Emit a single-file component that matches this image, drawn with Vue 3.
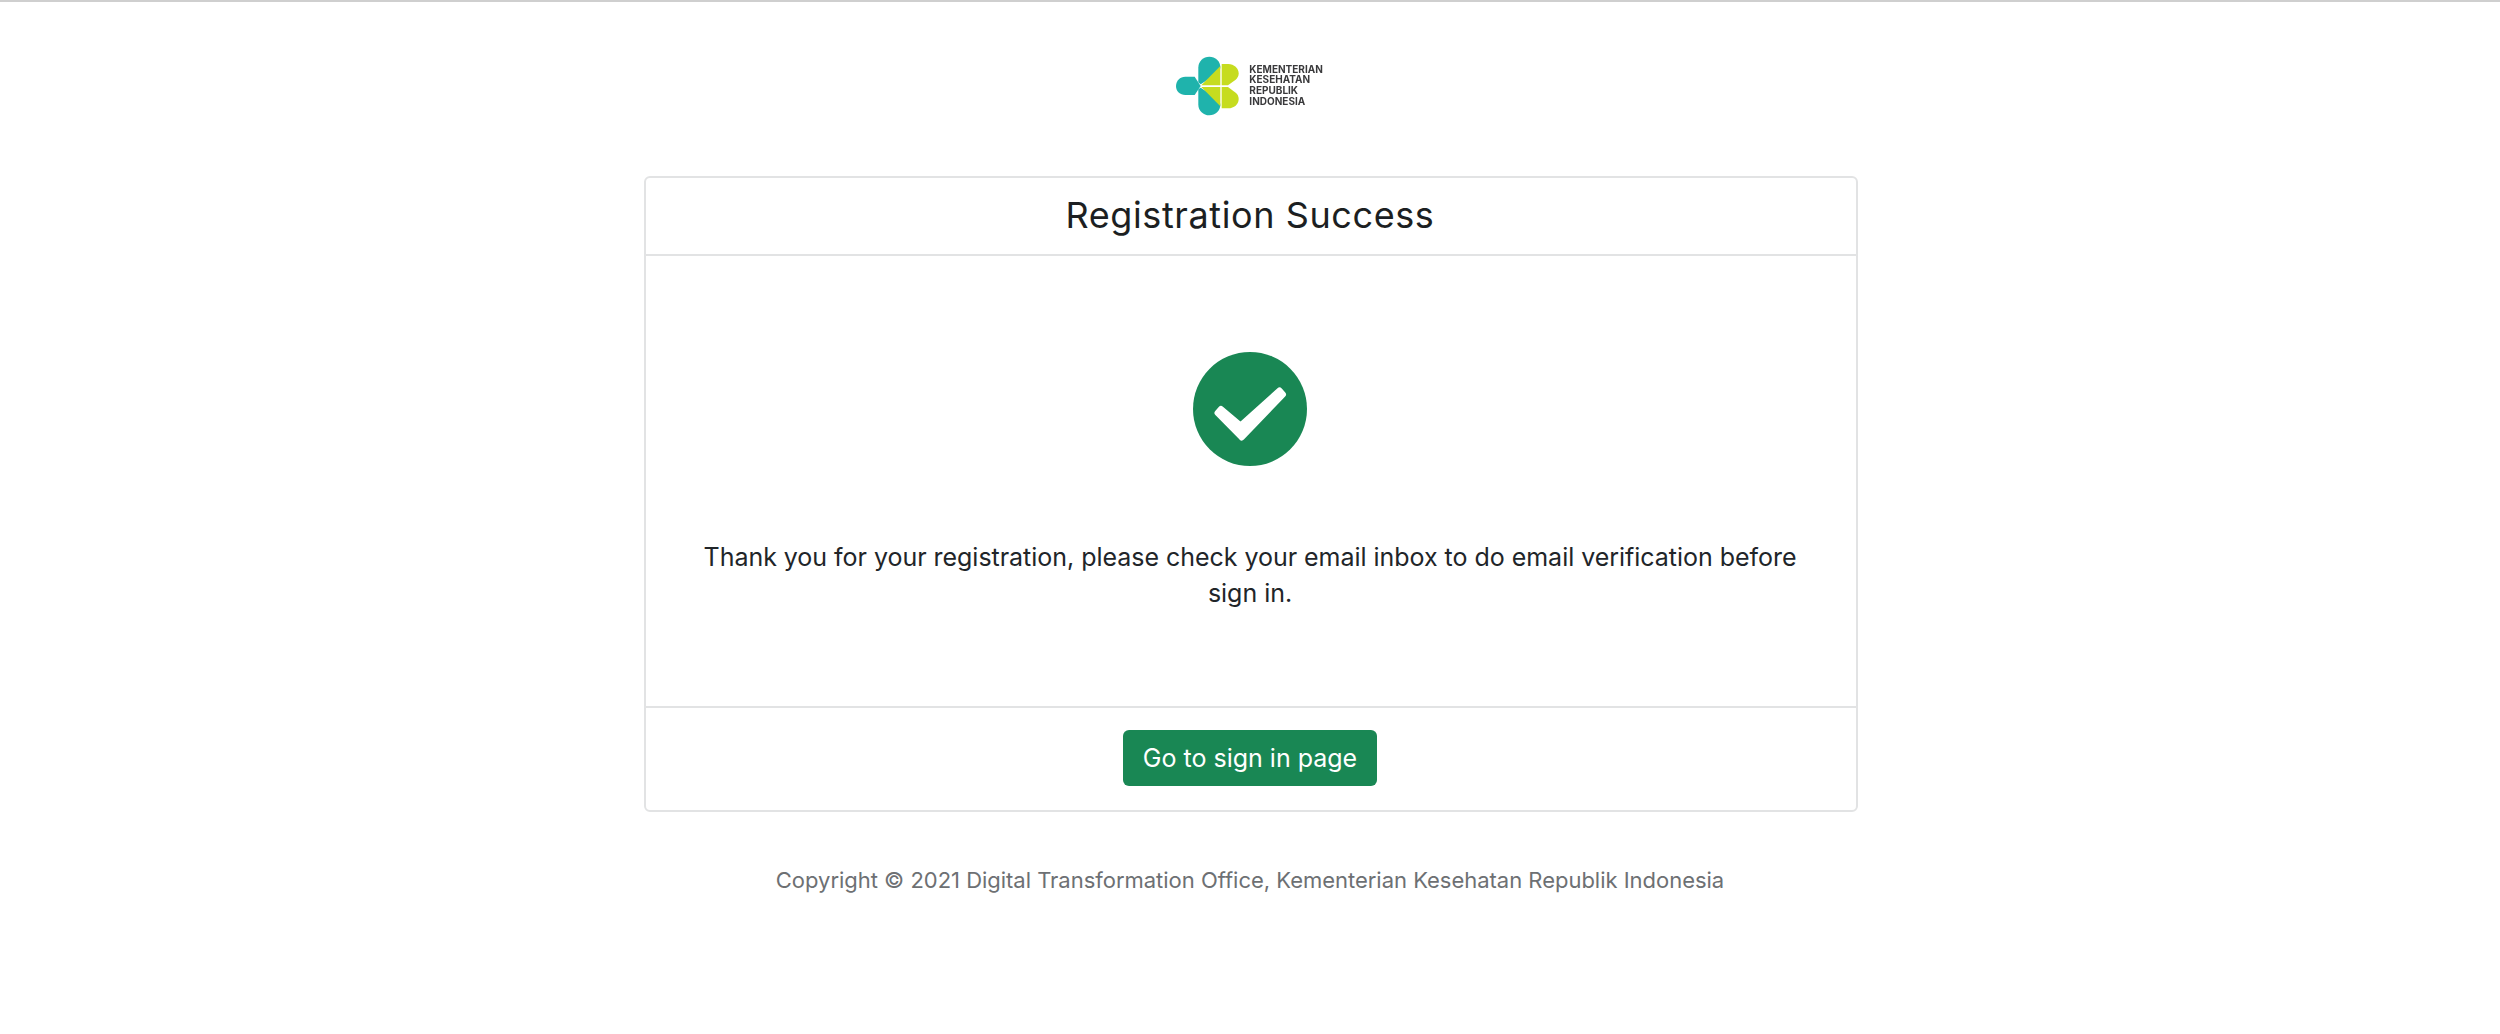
<script setup>
const copyright = 'Copyright © 2021 Digital Transformation Office, Kementerian Kesehatan Republik Indonesia'
</script>

<template>
  <div class="page">
    <header class="logo-row">
      <svg class="logo" viewBox="0 0 600 270" width="200" height="90" role="img" aria-label="Kementerian Kesehatan Republik Indonesia">
        <path fill="#1fb3ac" d="M78 138c0-16 12-28 28-28h28l18 28-18 27h-28c-16 0-28-11-28-27z" />
        <path fill="#1fb3ac" d="M145 82c0-18 15-32 33-32s33 14 33 31c0 9-4 15-10 20l-49 32-7-6z" />
        <path fill="#1fb3ac" d="M145 194c0 18 15 32 33 32s33-14 33-31c0-8-4-14-10-20l-49-32-7 5z" />
        <path fill="#c6dc1f" d="M211 78v58h-57z" />
        <path fill="#c6dc1f" d="M215 72h20c17 0 31 13 31 28 0 8-3 14-9 19l-23 17h-19z" />
        <path fill="#c6dc1f" d="M154 141h57v58z" />
        <path fill="#c6dc1f" d="M215 141h19l23 17c6 5 9 11 9 19 0 16-14 28-31 28h-20z" />
        <g class="logo-text">
          <text x="298" y="98">KEMENTERIAN</text>
          <text x="298" y="129">KESEHATAN</text>
          <text x="298" y="161">REPUBLIK</text>
          <text x="298" y="194">INDONESIA</text>
        </g>
      </svg>
    </header>

    <main class="card">
      <div class="card-header">
        <h1>Registration Success</h1>
      </div>
      <div class="card-body">
        <svg class="check" viewBox="0 0 114 114" width="114" height="114" aria-hidden="true">
          <circle cx="57" cy="57" r="57" fill="#198754" />
          <path d="M24.5 61 28 57 47.6 73.5 86.5 38.5 90 42.5 48.7 85.5Z" fill="#fff" stroke="#fff" stroke-width="6" stroke-linejoin="round" />
        </svg>
        <p>Thank you for your registration, please check your email inbox to do email verification before sign in.</p>
      </div>
      <div class="card-footer">
        <button type="button" class="btn">Go to sign in page</button>
      </div>
    </main>

    <footer class="copyright">{{ copyright }}</footer>
  </div>
</template>

<style>
html, body { margin: 0; background: #fff; }
</style>

<style scoped>
.page {
  min-height: 1034px;
  box-sizing: border-box;
  border-top: 2px solid #cfcfcf;
  display: flex;
  flex-direction: column;
  align-items: center;
  font-family: Inter, "Noto Sans", "Liberation Sans", sans-serif;
  color: #212529;
}
.logo-row {
  height: 174px;
  width: 100%;
  display: flex;
  justify-content: center;
}
.logo { margin-top: 38px; filter: blur(0.4px); }
.logo-text { font: 700 30px Inter, sans-serif; fill: #3a3a3c; }
.card {
  width: 1214px;
  box-sizing: border-box;
  border: 2px solid #e2e3e4;
  border-radius: 6px;
  display: flex;
  flex-direction: column;
  margin-left: 2px;
}
.card-header {
  height: 78px;
  box-sizing: border-box;
  border-bottom: 2px solid #e2e3e4;
  padding: 0 2px 2px 0;
  display: flex;
  align-items: center;
  justify-content: center;
}
h1 { margin: 0; font-size: 36px; font-weight: 400; letter-spacing: 0.6px; color: #1c1f22; }
.card-body {
  height: 450px;
  box-sizing: border-box;
  padding: 96px 58px 0 56px;
  text-align: center;
  display: flex;
  flex-direction: column;
  align-items: center;
}
.check { display: block; }
p { margin: 73px 0 0; font-size: 25px; letter-spacing: -0.03px; line-height: 36px; color: #212529; }
.card-footer {
  height: 104px;
  box-sizing: border-box;
  border-top: 2px solid #e2e3e4;
  padding: 0 2px 2px 0;
  display: flex;
  align-items: center;
  justify-content: center;
}
.btn {
  width: 254px;
  height: 56px;
  border: 0;
  border-radius: 6px;
  background: #198754;
  color: #fff;
  padding: 0;
  font: 400 25px Inter, sans-serif;
}
.copyright { margin-top: 52px; font-size: 22px; letter-spacing: -0.02px; line-height: 32px; color: #6d7073; }
</style>
